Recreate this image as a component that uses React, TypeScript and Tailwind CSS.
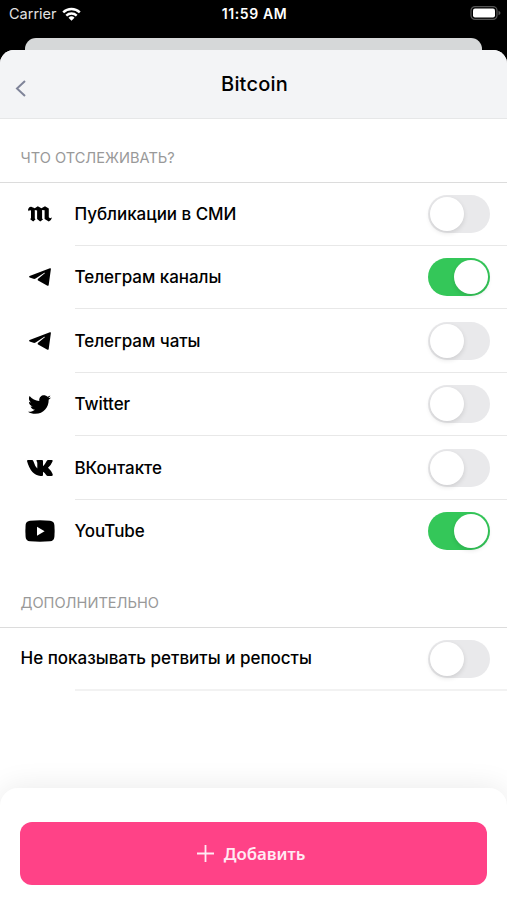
import { useState, type ReactNode } from "react";
import { FaTwitter } from "react-icons/fa";

interface Source {
  id: string;
  title: string;
  icon: ReactNode;
  enabled: boolean;
}

const MeduzaIcon = () => (
  <svg width="24" height="16" viewBox="0 0 24 16" fill="currentColor">
    <path d="M0 3.8Q.8.5 3.2.7L6.8 2.2 9.8.3 13.4 2.2 17 .3 20.8 2.4V11.3L22 12.2 24 11.4Q23.2 14.8 20.8 15.5L16.6 13V4.3L14.1 4V12.5L15 13.4 12.2 15.6 9.1 13V4.4L6.8 4V12.5L7.6 13.3 5.2 15.6 2.2 13.3 3 12V4.6Q1.5 3.8.8 5.2z" />
  </svg>
);

const TelegramIcon = () => (
  <svg width="22" height="18" viewBox="0 0 22 18" fill="currentColor">
    <path d="M.6 8.1L20.9.2Q22.1-.1 21.9 1.1L19.7 16.9Q19.3 18.3 18 17.5L9.1 12.6Q8.2 11.7 9.1 10.8L16.1 4.9Q15.7 4.5 15 4.9L6.6 10.6Q5.5 11.1 4.5 10.8L.6 9.4Q-.4 8.7.6 8.1z" />
  </svg>
);

const VkIcon = () => (
  <svg width="26" height="16" viewBox="0 0 26 16" fill="currentColor">
    <path d="M0 1.1Q0 0 1 0h4q1 0 1.3 1 1.7 5.3 4 7.6V3Q10.2 1.4 9.3.7 9.5 0 10.4 0h4.6q1 0 1 1v5.2q2.2-1.9 3.7-5.1Q20.1 0 21.2 0h3.6q1.2 0 .8 1.2-1.5 3.8-4.6 6.6 3 2.6 4.6 6.2.6 2-1.2 2h-3.6q-1 0-1.6-.9-1.5-2.3-3.2-3.3V15q0 1-1 1h-1.5Q4 15.6 0 1.1z" />
  </svg>
);

const YoutubeIcon = () => (
  <svg width="30" height="22" viewBox="0 0 30 22" fill="currentColor">
    <path d="M5 .7Q15 0 25 .7Q29 1 29.4 5Q29.9 11 29.4 17Q29 21 25 21.3Q15 22 5 21.3Q1 21 .6 17Q.1 11 .6 5Q1 1 5 .7z" />
    <path d="M12 6.7l7.6 4.5-7.6 4.5z" fill="white" />
  </svg>
);

const initialSources: Source[] = [
  { id: "media", title: "Публикации в СМИ", icon: <MeduzaIcon />, enabled: false },
  { id: "channels", title: "Телеграм каналы", icon: <TelegramIcon />, enabled: true },
  { id: "chats", title: "Телеграм чаты", icon: <TelegramIcon />, enabled: false },
  { id: "twitter", title: "Twitter", icon: <FaTwitter size={23} />, enabled: false },
  { id: "vk", title: "ВКонтакте", icon: <VkIcon />, enabled: false },
  { id: "youtube", title: "YouTube", icon: <YoutubeIcon />, enabled: true },
];

function Toggle({ checked, onChange }: { checked: boolean; onChange: () => void }) {
  return (
    <button
      role="switch"
      aria-checked={checked}
      onClick={onChange}
      className={`flex h-[38px] w-[62px] shrink-0 items-center rounded-full p-[2px] ${
        checked ? "justify-end bg-[#34c759]" : "justify-start bg-[#e9e9eb]"
      }`}
    >
      <span className="size-[34px] rounded-full bg-white shadow-[0_2px_5px_rgba(0,0,0,0.12)]"></span>
    </button>
  );
}

function StatusBar() {
  return (
    <div className="flex h-[38px] items-start justify-between pr-[6px] pl-[9px] text-white">
      <div className="flex w-[100px] items-center gap-[5px] pt-1 text-[14.5px] leading-5 text-[#e2e2e2]">
        <span>Carrier</span>
        <svg width="19" height="14" viewBox="0 0 19 14" fill="none" stroke="white" strokeWidth="2.4">
          <path d="M1.2 5.3a12 12 0 0 1 16.6 0M4.3 8.6a7.6 7.6 0 0 1 10.4 0" />
          <path d="M6.5 10.8a4.3 4.3 0 0 1 6 0L9.5 13.8z" fill="white" stroke="none" />
        </svg>
      </div>
      <div className="pt-1 text-[14px] leading-5 font-semibold tracking-[0.6px]">11:59 AM</div>
      <div className="flex w-[101px] justify-end pt-[6px]">
        <svg width="31" height="14" viewBox="0 0 31 14">
          <rect x="1" y=".6" width="26" height="12.8" rx="4" fill="none" stroke="#555" strokeWidth="1.2" />
          <rect x="3" y="2.4" width="22" height="9.2" rx="2" fill="white" />
          <path d="M28.5 4.8q2 .8 2 2.2t-2 2.2z" fill="#555" />
        </svg>
      </div>
    </div>
  );
}

function SectionTitle({ children }: { children: ReactNode }) {
  return (
    <h2 className="flex h-16 shrink-0 items-center border-b border-[#dcdcdc] px-[20.5px] pt-[17px] text-[14.6px] text-[#999]">
      {children}
    </h2>
  );
}

export default function App() {
  const [sources, setSources] = useState(initialSources);
  const [hideReposts, setHideReposts] = useState(false);

  const toggleSource = (id: string) => {
    setSources(sources.map((s) => (s.id === id ? { ...s, enabled: !s.enabled } : s)));
  };

  return (
    <div className="flex h-[900px] w-[507px] flex-col overflow-hidden bg-black font-['Inter','Liberation_Sans',sans-serif] text-black">
      <StatusBar />
      <div className="mx-[25px] h-6 shrink-0 rounded-t-[11px] bg-[#d6d8d9]"></div>

      <div className="-mt-3 flex flex-1 flex-col overflow-hidden rounded-t-[14px] bg-white">
        <header className="flex h-[69px] shrink-0 items-center border-b border-[#e6e7e8] bg-[#f3f4f6]">
          <button className="w-20 pt-[8px] pl-[15px]">
            <svg width="12" height="17" viewBox="0 0 12 17" fill="none" stroke="#7f8499" strokeWidth="2">
              <path d="M10 1L2 8.5 10 16" />
            </svg>
          </button>
          <h1 className="flex-1 pl-[2px] text-center text-[20px] font-medium tracking-[0.2px]">Bitcoin</h1>
          <div className="w-20"></div>
        </header>

        <SectionTitle>ЧТО ОТСЛЕЖИВАТЬ?</SectionTitle>
        <ul className="-mt-px mb-px">
          {sources.map((source) => (
            <li key={source.id} className="group flex h-[63.5px]">
              <div className="flex w-[74.5px] items-center justify-center pl-[5px]">{source.icon}</div>
              <div className="flex flex-1 items-center justify-between border-b border-[#e8e8e8] pt-px pr-[17px] group-last:border-transparent">
                <span className="pt-[1.5px] text-[17px] font-medium tracking-[-0.04px]">{source.title}</span>
                <Toggle checked={source.enabled} onChange={() => toggleSource(source.id)} />
              </div>
            </li>
          ))}
        </ul>

        <SectionTitle>ДОПОЛНИТЕЛЬНО</SectionTitle>
        <div className="flex h-[61px] shrink-0 items-center justify-between pr-[17px] pl-[20.5px]">
          <span className="pt-px text-[17px] font-medium">Не показывать ретвиты и репосты</span>
          <Toggle checked={hideReposts} onChange={() => setHideReposts(!hideReposts)} />
        </div>
        <div className="ml-[75px] h-[2px] shrink-0 bg-[#f2f2f2]"></div>

        <footer className="mt-auto h-[112px] shrink-0 rounded-t-[18px] bg-white px-5 pt-[34px] shadow-[0_0_30px_rgba(0,0,0,0.09)]">
          <button className="flex h-[63px] w-full items-center justify-center gap-[10px] rounded-xl bg-[#ff4287] pr-[5px] font-['Noto_Sans',sans-serif] text-[16.8px] font-semibold text-[#ffeaf3]">
            <svg width="17" height="17" viewBox="0 0 17 17" stroke="currentColor" strokeWidth="1.8">
              <path d="M8.5 0v17M0 8.5h17" />
            </svg>
            Добавить
          </button>
        </footer>
      </div>
    </div>
  );
}
